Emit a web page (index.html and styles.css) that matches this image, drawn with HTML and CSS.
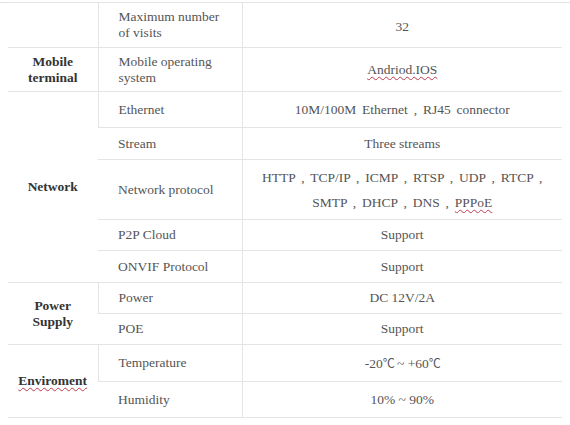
FILE: index.html
```html
<!DOCTYPE html>
<html>
<head>
<meta charset="utf-8">
<link rel="stylesheet" href="styles.css">
</head>
<body>
<div class="sheet">
<table class="spec">
  <colgroup><col class="c1"><col class="c2"><col class="c3"></colgroup>
  <tr class="h45"><td class="grp"></td><td class="key">Maximum number<br>of visits</td><td class="val lowered">32</td></tr>
  <tr class="h44"><td class="grp">Mobile<br>terminal</td><td class="key">Mobile operating<br>system</td><td class="val"><span class="spell">Andriod.IOS</span></td></tr>
  <tr class="h36"><td class="grp" rowspan="5">Network</td><td class="key">Ethernet</td><td class="val wide">10M/100M Ethernet , RJ45 connector</td></tr>
  <tr class="h32"><td class="key">Stream</td><td class="val">Three streams</td></tr>
  <tr class="h60"><td class="key">Network protocol</td><td class="val tall wide">HTTP , TCP/IP , ICMP , RTSP , UDP , RTCP ,<br>SMTP , DHCP , DNS , <span class="spell">PPPoE</span></td></tr>
  <tr class="h31"><td class="key">P2P Cloud</td><td class="val">Support</td></tr>
  <tr class="h32"><td class="key">ONVIF Protocol</td><td class="val">Support</td></tr>
  <tr class="h31"><td class="grp" rowspan="2">Power<br>Supply</td><td class="key">Power</td><td class="val">DC 12V/2A</td></tr>
  <tr class="h31"><td class="key">POE</td><td class="val">Support</td></tr>
  <tr class="h37"><td class="grp" rowspan="2"><span class="spell">Enviroment</span></td><td class="key">Temperature</td><td class="val">-20<span class="cjk">℃</span> ~ +60<span class="cjk">℃</span></td></tr>
  <tr class="h36"><td class="key">Humidity</td><td class="val">10% ~ 90%</td></tr>
</table>
</div>
</body>
</html>
```

FILE: styles.css
```css
html, body {
  margin: 0;
  padding: 0;
  background: #ffffff;
}
.sheet {
  width: 570px;
  height: 425px;
  padding-top: 2px;
  box-sizing: border-box;
  background: linear-gradient(#e2e2e2, #e2e2e2) no-repeat 0 2px / 100% 1px;
}
.spec {
  margin-left: 8px;
  width: 554px;
  border-collapse: collapse;
  table-layout: fixed;
  font-family: "Liberation Serif", "Times New Roman", serif;
  font-size: 13.5px;
  color: #555555;
}
.c1 { width: 90px; }
.c2 { width: 144px; }
.c3 { width: 320px; }
.spec td {
  border-top: 1px solid #e4e4e4;
  border-bottom: 1px solid #e4e4e4;
  padding: 0;
  vertical-align: middle;
  line-height: 16px;
}
.spec td + td {
  border-left: 1px solid #e4e4e4;
}
.grp {
  text-align: center;
  font-weight: bold;
  color: #333333;
}
.key {
  padding-left: 20px !important;
  text-align: left;
}
.val {
  text-align: center;
}
.val.lowered {
  padding-top: 4px !important;
}
.val.wide {
  word-spacing: 2.5px;
}
.val.tall {
  line-height: 25px;
}
.cjk {
  font-family: "Noto Sans CJK SC", sans-serif;
  font-size: 12px;
  letter-spacing: -1px;
}
.spell {
  text-decoration: underline wavy #c0394b;
  text-decoration-thickness: 1px;
  text-underline-offset: 2px;
}
.h45 { height: 45px; }
.h44 { height: 44px; }
.h36 { height: 36px; }
.h32 { height: 32px; }
.h60 { height: 60px; }
.h31 { height: 31px; }
.h37 { height: 37px; }
```
